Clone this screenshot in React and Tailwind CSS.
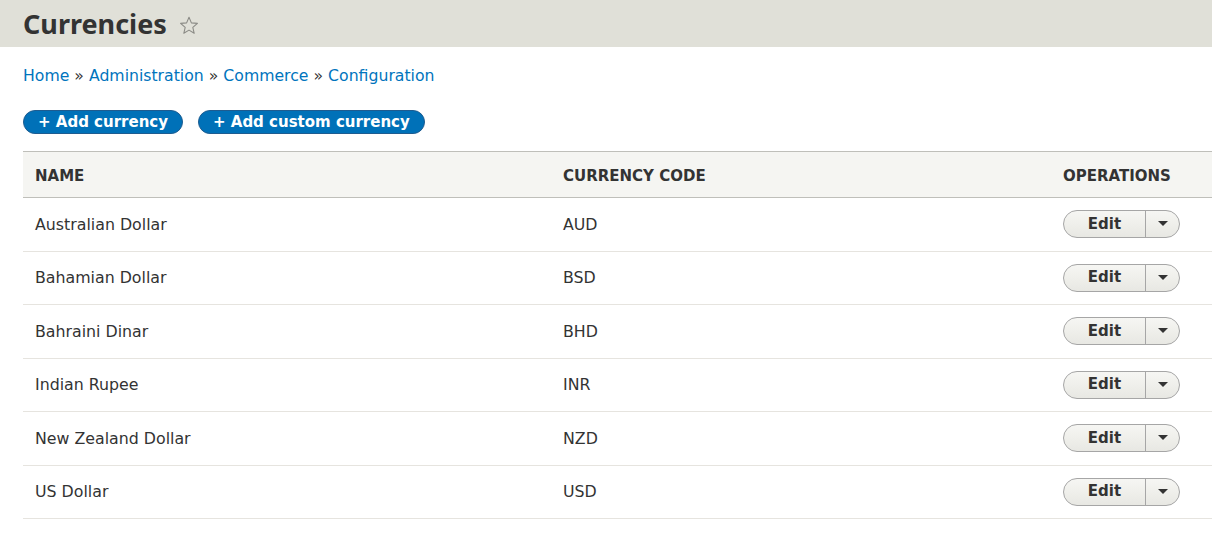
import React from 'react';

const rows = [
  { name: 'Australian Dollar', code: 'AUD' },
  { name: 'Bahamian Dollar', code: 'BSD' },
  { name: 'Bahraini Dinar', code: 'BHD' },
  { name: 'Indian Rupee', code: 'INR' },
  { name: 'New Zealand Dollar', code: 'NZD' },
  { name: 'US Dollar', code: 'USD' },
];

const font = { fontFamily: '"DejaVu Sans", "Noto Sans", sans-serif' };

const EditButton = () => (
  <div className="flex h-[28px] w-[117px] items-stretch rounded-full border border-[#a6a6a6] bg-gradient-to-b from-[#f6f6f3] to-[#e8e8e3] text-[#333]">
    <button className="flex-1 text-[15px] font-bold leading-none">Edit</button>
    <div className="w-px bg-[#a6a6a6]" />
    <button className="flex w-[33px] items-center justify-center">
      <svg width="10" height="6" viewBox="0 0 10 6">
        <path d="M0 0 L10 0 L5 5 Z" fill="#333" />
      </svg>
    </button>
  </div>
);

export default function App() {
  return (
    <div className="min-h-[553px] w-full bg-white text-[#333]" style={font}>
      {/* Page title band */}
      <div className="flex h-[47px] items-center bg-[#e0e0d8] px-[23px]">
        <h1 className="text-[27px] font-bold leading-none text-[#333]" style={{ fontFamily: '"Noto Sans", sans-serif' }}>
          Currencies
        </h1>
        <svg className="ml-[12px] mt-[3px]" width="20" height="19" viewBox="0 0 24 23">
          <path
            d="M12 1.5 L14.9 8.3 L22.2 8.9 L16.6 13.7 L18.3 20.9 L12 17.1 L5.7 20.9 L7.4 13.7 L1.8 8.9 L9.1 8.3 Z"
            fill="none"
            stroke="#8a8a85"
            strokeWidth="1.3"
            strokeLinejoin="round"
          />
        </svg>
      </div>

      <div className="pl-[23px]">
        {/* Breadcrumb */}
        <nav className="mt-[19px] flex items-center text-[15.7px] leading-[20px] text-[#0074bd]">
          <a>Home</a>
          <span className="mx-[5px] text-[#333]">»</span>
          <a>Administration</a>
          <span className="mx-[5px] text-[#333]">»</span>
          <a>Commerce</a>
          <span className="mx-[5px] text-[#333]">»</span>
          <a>Configuration</a>
        </nav>

        {/* Action buttons */}
        <div className="mt-[24px] flex gap-[15px]">
          <button className="h-[24px] rounded-full border border-[#1e5c90] bg-[#0071b8] px-[14px] text-[15px] font-bold leading-none text-white">
            + Add currency
          </button>
          <button className="h-[24px] rounded-full border border-[#1e5c90] bg-[#0071b8] px-[14px] text-[15px] font-bold leading-none text-white">
            + Add custom currency
          </button>
        </div>

        {/* Table */}
        <table className="mt-[17px] w-full border-collapse text-left">
          <thead>
            <tr className="h-[46px] border-y border-[#bfbfba] bg-[#f5f5f2]">
              <th className="w-[528px] pl-[12px] pt-[3px] text-[15px] font-bold uppercase">Name</th>
              <th className="w-[500px] pl-[12px] pt-[3px] text-[15px] font-bold uppercase">Currency code</th>
              <th className="pl-[12px] pt-[3px] text-[15px] font-bold uppercase">Operations</th>
            </tr>
          </thead>
          <tbody>
            {rows.map((r) => (
              <tr key={r.code} className="h-[53.5px] border-b border-[#e6e4df]">
                <td className="pl-[12px] pt-[1px] text-[15.8px]">{r.name}</td>
                <td className="pl-[12px] pt-[1px] text-[15.8px]">{r.code}</td>
                <td className="pl-[12px]">
                  <EditButton />
                </td>
              </tr>
            ))}
          </tbody>
        </table>
      </div>
    </div>
  );
}
